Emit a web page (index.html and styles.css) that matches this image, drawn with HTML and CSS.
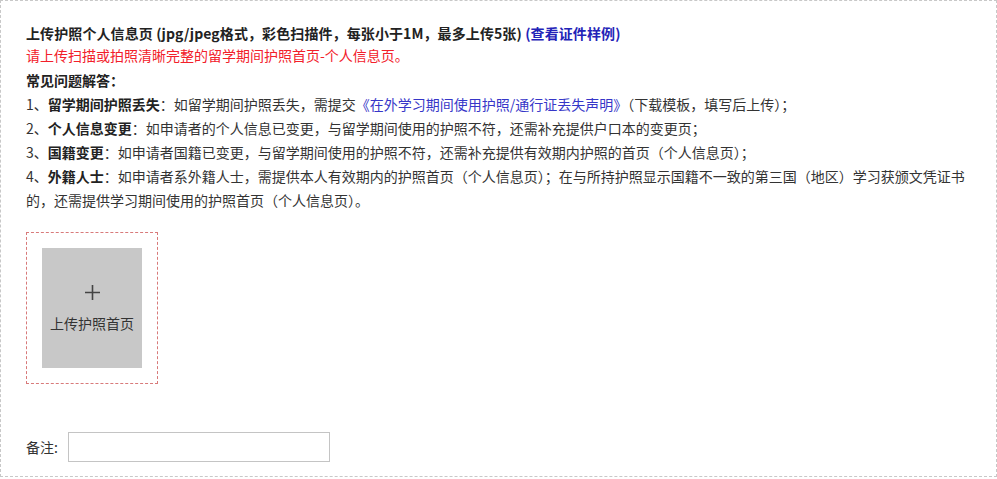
FILE: index.html
```html
<!DOCTYPE html>
<html lang="zh-CN">
<head>
<meta charset="utf-8">
<title>上传护照个人信息页</title>
<link rel="stylesheet" href="styles.css">
</head>
<body>
<div class="panel">
  <div class="title">上传护照个人信息页 (jpg/jpeg格式，彩色扫描件，每张小于1M，最多上传5张) <a class="sample" href="#">(查看证件样例)</a></div>
  <div class="warn">请上传扫描或拍照清晰完整的留学期间护照首页-个人信息页。</div>
  <div class="faq">
    <div class="faq-head">常见问题解答：</div>
    <div class="item">1、<b>留学期间护照丢失</b>：如留学期间护照丢失，需提交<a class="doc" href="#">《在外学习期间使用护照/通行证丢失声明》</a>（下载模板，填写后上传）；</div>
    <div class="item">2、<b>个人信息变更</b>：如申请者的个人信息已变更，与留学期间使用的护照不符，还需补充提供户口本的变更页；</div>
    <div class="item">3、<b>国籍变更</b>：如申请者国籍已变更，与留学期间使用的护照不符，还需补充提供有效期内护照的首页（个人信息页）；</div>
    <div class="item">4、<b>外籍人士</b>：如申请者系外籍人士，需提供本人有效期内的护照首页（个人信息页）；在与所持护照显示国籍不一致的第三国（地区）学习获颁文凭证书的，还需提供学习期间使用的护照首页（个人信息页）。</div>
  </div>
  <div class="upload">
    <div class="upload-tile">
      <svg class="plus" width="15" height="15" viewBox="0 0 15 15"><path d="M7.5 0V15M0 7.5H15" stroke="#444" stroke-width="1.6" fill="none"/></svg>
      <span class="upload-text">上传护照首页</span>
    </div>
  </div>
  <div class="remark">
    <label class="remark-label">备注:</label>
    <input class="remark-input" type="text">
  </div>
</div>
</body>
</html>
```

FILE: styles.css
```css
html, body {
  margin: 0;
  padding: 0;
  background: #fff;
}
body {
  font-family: "Noto Sans CJK SC", "Microsoft YaHei", sans-serif;
  font-size: 14px;
  color: #333;
}
.panel {
  box-sizing: border-box;
  width: 997px;
  height: 477px;
  border: 1px dashed #c8c8c8;
  padding: 21px 15px 0 25px;
}
.title {
  font-weight: bold;
  line-height: 22px;
  color: #222;
  letter-spacing: 0.1px;
}
.sample {
  color: #2323b8;
  text-decoration: none;
}
.warn {
  color: #f2202a;
  line-height: 22px;
}
.faq {
  line-height: 24px;
  margin-top: 2px;
}
.faq-head {
  font-weight: bold;
  color: #222;
}
.item b {
  color: #222;
}
.doc {
  color: #3636c8;
  text-decoration: none;
}
.upload {
  margin-top: 20px;
  width: 100px;
  padding: 15px;
  border: 1px dashed #d87a7a;
}
.upload-tile {
  height: 120px;
  background: #c8c8c8;
  display: flex;
  flex-direction: column;
  align-items: center;
  padding-top: 37px;
  box-sizing: border-box;
}
.plus {
  display: block;
}
.upload-text {
  margin-top: 13px;
  line-height: 20px;
  color: #333;
}
.remark {
  margin-top: 48px;
  display: flex;
  align-items: center;
}
.remark-label {
  width: 42px;
  line-height: 20px;
}
.remark-input {
  box-sizing: border-box;
  width: 262px;
  height: 30px;
  margin: 0;
  border: 1px solid #c4c4c4;
  outline: none;
  font: inherit;
}
```
